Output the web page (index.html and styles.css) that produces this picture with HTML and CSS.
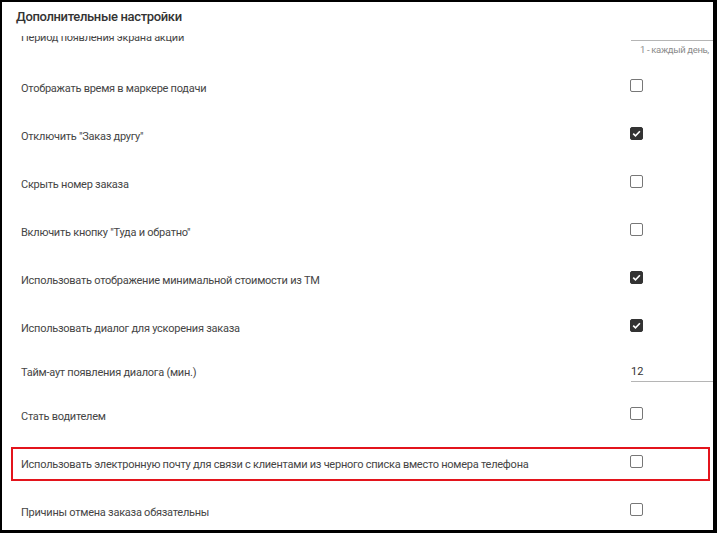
FILE: index.html
```html
<!DOCTYPE html>
<html lang="ru">
<head>
    <meta charset="UTF-8">
    <meta name="viewport" content="width=device-width, initial-scale=1.0">
    <title>Дополнительные настройки</title>
    <link rel="stylesheet" href="styles.css">
</head>
<body>
    <div class="frame">
        <h2 class="title">Дополнительные настройки</h2>
        <div class="list">
            <div class="inner">
                <div class="row row-field">
                    <div class="label">Период появления экрана акции</div>
                    <div class="control">
                        <div class="field"></div>
                        <div class="hint">1 - каждый день,</div>
                    </div>
                </div>
                <div class="row">
                    <div class="label">Отображать время в маркере подачи</div>
                    <div class="control"><span class="check"></span></div>
                </div>
                <div class="row">
                    <div class="label">Отключить "Заказ другу"</div>
                    <div class="control"><span class="check on"><svg width="9" height="9" viewBox="0 0 9 9"><path d="M1.2 4.6 L3.5 6.9 L7.9 2.2" fill="none" stroke="#fff" stroke-width="1.6"/></svg></span></div>
                </div>
                <div class="row">
                    <div class="label">Скрыть номер заказа</div>
                    <div class="control"><span class="check"></span></div>
                </div>
                <div class="row">
                    <div class="label">Включить кнопку "Туда и обратно"</div>
                    <div class="control"><span class="check"></span></div>
                </div>
                <div class="row">
                    <div class="label">Использовать отображение минимальной стоимости из ТМ</div>
                    <div class="control"><span class="check on"><svg width="9" height="9" viewBox="0 0 9 9"><path d="M1.2 4.6 L3.5 6.9 L7.9 2.2" fill="none" stroke="#fff" stroke-width="1.6"/></svg></span></div>
                </div>
                <div class="row">
                    <div class="label">Использовать диалог для ускорения заказа</div>
                    <div class="control"><span class="check on"><svg width="9" height="9" viewBox="0 0 9 9"><path d="M1.2 4.6 L3.5 6.9 L7.9 2.2" fill="none" stroke="#fff" stroke-width="1.6"/></svg></span></div>
                </div>
                <div class="row row-short">
                    <div class="label">Тайм-аут появления диалога (мин.)</div>
                    <div class="control"><div class="field">12</div></div>
                </div>
                <div class="row">
                    <div class="label">Стать водителем</div>
                    <div class="control"><span class="check"></span></div>
                </div>
                <div class="row marked">
                    <div class="label">Использовать электронную почту для связи с клиентами из черного списка вместо номера телефона</div>
                    <div class="control"><span class="check"></span></div>
                </div>
                <div class="row">
                    <div class="label">Причины отмена заказа обязательны</div>
                    <div class="control"><span class="check"></span></div>
                </div>
            </div>
        </div>
    </div>
</body>
</html>
```

FILE: styles.css
```css
html,
body {
    margin: 0;
    height: 100%;
    background-color: #000;
}

body {
    font-family: Roboto, "Liberation Sans", Arial, sans-serif;
    color: #454545;
}

.frame {
    margin: 2px 4px 3px 2px;
    height: 528px;
    background-color: #fff;
    overflow: hidden;
    display: flex;
    flex-direction: column;
}

.title {
    margin: 0;
    height: 34px;
    line-height: 30px;
    padding-left: 14px;
    font-size: 13px;
    font-weight: 500;
    letter-spacing: -0.35px;
    color: #333;
    flex: 0 0 auto;
}

.list {
    flex: 1;
    overflow: hidden;
}

.inner {
    margin-top: -20px;
}

.row {
    position: relative;
    display: flex;
    align-items: center;
    height: 48px;
    padding-left: 19px;
    font-size: 11px;
    letter-spacing: -0.25px;
}

.row-short {
    height: 40px;
}

.row-field {
    align-items: flex-start;
}

.row-field .label {
    padding-top: 15px;
    line-height: 14px;
}

.row-field .control {
    padding-top: 5px;
}

.label {
    flex: 0 0 608px;
    white-space: nowrap;
}

.control {
    flex: 0 0 120px;
}

.field {
    margin-left: 2px;
    height: 19px;
    line-height: 20px;
    border-bottom: 1px solid #b5b5b5;
    color: #333;
    font-size: 11px;
    letter-spacing: 0;
}

.hint {
    margin-top: 3px;
    padding-left: 11px;
    font-size: 9.5px;
    line-height: 12px;
    letter-spacing: -0.35px;
    color: #8a8a8a;
    white-space: nowrap;
}

.check {
    display: flex;
    align-items: center;
    justify-content: center;
    box-sizing: border-box;
    width: 13px;
    height: 13px;
    margin-left: 1px;
    margin-bottom: 6px;
    border: 1.5px solid #777;
    border-radius: 2px;
    background-color: #fff;
}

.check.on {
    border-color: #333;
    background-color: #333;
}

.marked::after {
    content: "";
    position: absolute;
    top: 7px;
    bottom: 7px;
    left: 9px;
    right: 3px;
    border: 2px solid #e3141c;
}
```
